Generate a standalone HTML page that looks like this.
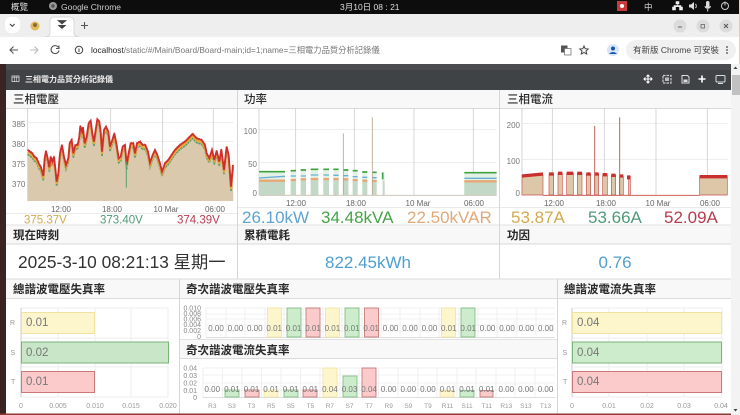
<!DOCTYPE html>
<html><head><meta charset="utf-8"><style>
html,body{margin:0;padding:0;width:740px;height:415px;overflow:hidden;background:#fff}
svg{display:block;position:absolute;left:0;top:0;filter:blur(.35px)}
text{font-family:"Liberation Sans","Noto Sans CJK TC",sans-serif}
.h{font-size:11.5px;fill:#2a2a2a;font-weight:500}
.hb{font-size:11.5px;fill:#2a2a2a;font-weight:700}
.a{font-size:7px;fill:#999}
.v{font-size:8px;fill:#777;text-anchor:middle}
.b{font-size:11.5px;fill:#777}
</style></head><body>
<svg width="740" height="415" viewBox="0 0 740 415" xmlns="http://www.w3.org/2000/svg">
<defs>
<polyline id="vl" points="83 180 90 185 97 190 103 200 110 205 117 222 123 232 130 258 134 205 138 183 143 205 148 232 152 200 157 215 162 200 166 235 170 275 175 250 180 190 186 165 192 200 198 225 205 205 209 160 215 150 220 190 226 165 233 165 238 140 241 108 246 125 249 112 254 160 260 140 266 100 272 92 277 130 282 155 287 120 292 88 298 95 302 125 306 185 312 120 318 110 325 125 330 170 337 150 343 130 350 165 356 205 362 200 368 170 375 165 380 225 385 195 392 160 400 160 405 190 411 160 420 155 428 165 436 165 444 185 450 218 458 195 465 180 472 195 480 220 486 245 495 220 505 210 515 195 525 180 540 165 555 155 565 145 578 132 590 145 605 150 615 165 620 190 628 205 636 180 643 210 650 182 658 215 664 178 672 240 680 170 686 195 693 290 699 225"/>
</defs>
<!-- OS bar -->
<rect width="740" height="14" fill="#0d0d0d"/>
<text x="11" y="10" font-size="8.5" fill="#ddd">概覽</text>
<circle cx="53" cy="6" r="4" fill="#999"/><circle cx="53" cy="6" r="1.7" fill="#555"/>
<text x="61" y="10" font-size="8.5" fill="#ccc">Google Chrome</text>
<text x="340" y="10" font-size="8.5" fill="#ddd">3月10日 08 : 21</text>
<rect x="617" y="1" width="10" height="10" fill="#c93a3a"/><circle cx="622" cy="6" r="2" fill="#fff"/>
<text x="644" y="10" font-size="8.5" fill="#ddd">中</text>
<path d="M676 1.5h3v2.5h-3zM672.500 7h3v3h-3zM679.500 7h3v3h-3zM677.500 4v1.500M674 7V5.500h7V7" fill="#eee" stroke="#eee" stroke-width=".6"/>
<path d="M689 4.500h2l3-2.500v8l-3-2.500h-2z" fill="#ddd"/><path d="M695.500 4a3 3 0 0 1 0 4" stroke="#ddd" fill="none"/>
<rect x="706" y="1" width="3.500" height="7" rx="1.700" fill="#ddd"/><path d="M705 6a2.800 2.800 0 0 0 5.500 0M707.700 9v2.500" stroke="#ddd" fill="none"/>
<circle cx="725" cy="6" r="3.500" stroke="#ccc" fill="none"/><path d="M725 1.500v4" stroke="#ccc"/>
<!-- tab strip -->
<rect y="14" width="740" height="23" fill="#eeeeef"/>
<rect x="5" y="17" width="15" height="16" rx="6" fill="#fff"/>
<path d="M10 24l2.300 2.300 2.300-2.300" stroke="#444" stroke-width="1.100" fill="none"/>
<circle cx="35" cy="26" r="4.500" fill="#e3bb55"/><circle cx="35" cy="25" r="2" fill="#8a6b3c"/>
<path d="M45 37q5 0 5-5V22q0-5 5-5h14q5 0 5 5v10q0 5 5 5z" fill="#fff" stroke="#cfcfcf" stroke-width=".7"/>
<path d="M58 20.500h8l-4 3.500zM58 25l4 3.500 4-3.500" fill="#444" stroke="#444" stroke-width=".8"/>
<path d="M81 25.500h7M84.500 22v7" stroke="#555" stroke-width="1.100"/>
<circle cx="680" cy="26" r="6.500" fill="#dcdcdc"/><path d="M678 27h4" stroke="#666"/>
<circle cx="703" cy="26" r="6.500" fill="#dcdcdc"/><rect x="701" y="24.500" width="3.500" height="3.500" stroke="#666" fill="none" stroke-width=".8"/>
<circle cx="726" cy="26" r="6.500" fill="#dcdcdc"/><path d="M724 24l4 4M728 24l-4 4" stroke="#555"/>
<!-- toolbar -->
<rect y="37" width="740" height="27" fill="#fff"/>
<path d="M18 50h-8M13.500 46.500L10 50l3.500 3.500" stroke="#555" stroke-width="1.100" fill="none"/>
<path d="M30 50h8M34.500 46.500L38 50l-3.500 3.500" stroke="#bbb" stroke-width="1.100" fill="none"/>
<path d="M58.500 47.500a4 4 0 1 0 .5 3M59 45.500v3h-3" stroke="#555" stroke-width="1.100" fill="none"/>
<circle cx="79" cy="50" r="3.700" stroke="#444" fill="none"/><path d="M79 48.500v3.500" stroke="#444"/>
<text x="91" y="53" font-size="8.300" fill="#777"><tspan fill="#222">localhost</tspan>/static/#/Main/Board/Board-main;id=1;name=三相電力品質分析記錄儀</text>
<rect x="561" y="45.500" width="6.500" height="7" fill="#555"/><rect x="564.500" y="48.500" width="6.500" height="6.500" fill="#fff" stroke="#666" stroke-width=".7"/>
<path d="M584 46l1.200 2.700 3 .3-2.200 2 .7 3-2.700-1.600-2.700 1.600.7-3-2.200-2 3-.3z" stroke="#444" fill="none"/>
<circle cx="613" cy="50" r="6" fill="#d8e6f8"/><circle cx="613" cy="48.500" r="2" fill="#1a57b0"/><path d="M609 54q4-4 8 0z" fill="#1a57b0"/>
<rect x="626" y="40" width="110" height="20" rx="10" fill="#f0f0f1"/>
<text x="633" y="53" font-size="8.500" fill="#444">有新版 Chrome 可安裝</text>
<circle cx="727" cy="47" r=".9" fill="#444"/><circle cx="727" cy="50" r=".9" fill="#444"/><circle cx="727" cy="53" r=".9" fill="#444"/>
<!-- page bg -->
<rect y="64" width="6" height="351" fill="#3a2422"/>
<rect x="6" y="64" width="725" height="26" fill="#404346"/>
<rect x="6" y="64" width="725" height="6" fill="#4a4c4f"/>
<rect x="12" y="76" width="7" height="5.500" stroke="#ddd" stroke-width=".8" fill="none"/><path d="M12 77.500h7M14.500 76v5.500M16.500 76v5.500" stroke="#ddd" stroke-width=".6"/>
<text x="25" y="82" font-size="8" fill="#eee" font-weight="700">三相電力品質分析記錄儀</text>
<path d="M644 79h8M648 75v8M646.500 76.500l1.500-1.500 1.500 1.500M646.500 81.500l1.500 1.500 1.500-1.500M645.500 77.500L644 79l1.500 1.500M650.500 77.500L652 79l-1.500 1.500" stroke="#fff" stroke-width="1.100" fill="none"/>
<rect x="663" y="75.500" width="8" height="7.500" fill="none" stroke="#ccc" stroke-width="1.200" stroke-dasharray="2.500 1"/><rect x="665" y="77.500" width="4" height="3.500" fill="#bbb"/>
<path d="M682 75.500h5.500l1.500 1.500v6h-7z" fill="none" stroke="#ddd" stroke-width="1"/><rect x="683.500" y="79.500" width="4" height="2.500" fill="#ddd"/>
<path d="M698.500 79h7M702 75.500v7" stroke="#fff" stroke-width="1.600"/>
<rect x="716" y="75.500" width="9" height="6.500" rx="1" fill="none" stroke="#ddd"/><path d="M718 83.500h5" stroke="#ddd"/>
<!-- scrollbar -->
<rect x="731" y="64" width="9" height="351" fill="#f3f3f3"/>
<path d="M735.500 66.500l-2 2.500h4z" fill="#444"/><rect x="732" y="75" width="8" height="20" fill="#c1c1c1"/>
<path d="M735.500 411.500l-2-2.500h4z" fill="#444"/>
<rect x="739" y="0" width="1" height="64" fill="#e9c8c8"/>

<!-- row headers -->
<rect x="6" y="90" width="725" height="18" fill="#f8f8f8"/><rect x="6" y="108" width="725" height="1" fill="#d9d9d9"/>
<rect x="6" y="225" width="725" height="19" fill="#f8f8f8"/><rect x="6" y="243.500" width="725" height="1" fill="#d9d9d9"/><rect x="6" y="224.500" width="725" height="1" fill="#e2e2e2"/>
<rect x="6" y="279" width="725" height="19" fill="#f8f8f8"/><rect x="6" y="278.500" width="725" height="1" fill="#dcdcdc"/><rect x="6" y="298" width="725" height="1" fill="#dcdcdc"/>
<rect x="180" y="339" width="377" height="19" fill="#f8f8f8"/><rect x="180" y="339" width="377" height=".8" fill="#dcdcdc"/><rect x="180" y="358" width="377" height="1" fill="#dcdcdc"/>
<path d="M237.500 90v189M499.500 90v189M179.500 279v136M557.500 279v136" stroke="#d6d6d6" stroke-width="1"/>
<text class="h" x="13" y="103">三相電壓</text>
<text class="h" x="244" y="103">功率</text>
<text class="h" x="507" y="103">三相電流</text>
<text class="hb" x="13" y="239">現在時刻</text>
<text class="hb" x="244" y="239">累積電耗</text>
<text class="hb" x="507" y="239">功因</text>
<text class="hb" x="13" y="293">總諧波電壓失真率</text>
<text class="hb" x="186" y="293">奇次諧波電壓失真率</text>
<text class="hb" x="564" y="293">總諧波電流失真率</text>
<text class="hb" x="186" y="354">奇次諧波電流失真率</text>

<!-- voltage chart (zoom coords) -->
<g transform="translate(0 90) scale(.3333)">
<path d="M83 97H700M83 155H700M83 215H700M83 275H700" stroke="#e3e3e3" stroke-width="2"/>
<path d="M83 55V333M178 55V333M332 55V333M488 55V333M640 55V333" stroke="#cfcfcf" stroke-width="2.500"/>
<path d="M83 180L90 185 97 190 103 200 110 205 117 222 123 232 130 258 134 205 138 183 143 205 148 232 152 200 157 215 162 200 166 235 170 275 175 250 180 190 186 165 192 200 198 225 205 205 209 160 215 150 220 190 226 165 233 165 238 140 241 108 246 125 249 112 254 160 260 140 266 100 272 92 277 130 282 155 287 120 292 88 298 95 302 125 306 185 312 120 318 110 325 125 330 170 337 150 343 130 350 165 356 205 362 200 368 170 375 165 380 225 385 195 392 160 400 160 405 190 411 160 420 155 428 165 436 165 444 185 450 218 458 195 465 180 472 195 480 220 486 245 495 220 505 210 515 195 525 180 540 165 555 155 565 145 578 132 590 145 605 150 615 165 620 190 628 205 636 180 643 210 650 182 658 215 664 178 672 240 680 170 686 195 693 290 699 225 L700 333 83 333Z" fill="#dac9ac"/>
<g fill="none" stroke-linejoin="miter">
<use href="#vl" transform="translate(0 13)" stroke="#55a06e" stroke-width="5" stroke-dasharray="7 2"/>
<use href="#vl" transform="translate(0 7)" stroke="#e8a83a" stroke-width="6"/>
<use href="#vl" stroke="#cf2f2c" stroke-width="5.500"/>
<use href="#vl" transform="translate(0 -3)" stroke="#cf2f2c" stroke-width="3" stroke-dasharray="2 4"/>
<path d="M379 215V293" stroke="#55a06e" stroke-width="3"/>
</g>
</g>
<g style="font-size:8px;fill:#777"><text x="12" y="127">385</text><text x="12" y="147">380</text><text x="12" y="167">375</text><text x="12" y="187">370</text></g>
<g style="font-size:8px;fill:#666" text-anchor="middle"><text x="61" y="212">12:00</text><text x="112" y="212">18:00</text><text x="166" y="212">10 Mar</text><text x="215" y="212">06:00</text></g>
<rect x="6" y="213" width="231" height=".8" fill="#e4e4e4"/>
<text x="24" y="223.500" style="font-size:11.500px;fill:#d2a94f">375.37V</text>
<text x="100" y="223.500" style="font-size:11.500px;fill:#4f9a78">373.40V</text>
<text x="177" y="223.500" style="font-size:11.500px;fill:#b83c50">374.39V</text>

<!-- power chart -->
<g transform="translate(240 90) scale(.3333)">
<path d="M57 118H770M57 217H770" stroke="#e3e3e3" stroke-width="2"/>
<path d="M57 55V315M167 55V315M343 55V315M522 55V315M700 55V315" stroke="#cfcfcf" stroke-width="2.500"/>
<path d="M57 245H135V315H57ZM152 242H168V315H152ZM182 240H198V315H182ZM212 238H235V315H212ZM250 238H267V315H250ZM280 238H296V315H280ZM310 240H325V315H310ZM338 242H353V315H338ZM367 246H382V315H367ZM396 247H410V315H396ZM428 247H434V315H428ZM673 248H770V315H673Z" fill="#e3f2e4"/>
<path d="M57 272H135V315H57ZM152 270H168V315H152ZM182 268H198V315H182ZM212 266H235V315H212ZM250 266H267V315H250ZM280 266H296V315H280ZM310 268H325V315H310ZM338 270H353V315H338ZM367 272H382V315H367ZM396 272H410V315H396ZM428 272H434V315H428ZM673 272H770V315H673Z" fill="#c3d8c6"/>
<path d="M57 245H135M152 242H168M182 240H198M212 238H235M250 238H267M280 238H296M310 240H325M338 242H353M367 246H382M396 247H410M428 247V268M673 248H770" stroke="#3fa33f" stroke-width="5" fill="none"/>
<path d="M57 264L135 259M152 258H168M182 258H198M212 255H235M250 255H267M280 256H296M310 257H325M338 260H353M367 262H382M396 263H410M673 265H770" stroke="#6aaed6" stroke-width="4" fill="none"/>
<path d="M57 272H135M152 270H168M182 268H198M212 267H235M250 267H267M280 267H296M310 268H325M338 270H353M367 272H382M396 273H410M673 274H770" stroke="#e6a877" stroke-width="7" fill="none"/>
<path d="M310 130V315M397 82V315" stroke="#b8a689" stroke-width="2.500"/>
<path d="M57 316H770" stroke="#c9c0b0" stroke-width="2.500"/>
</g>
<g style="font-size:8px;fill:#777" text-anchor="end"><text x="257" y="134">100</text><text x="257" y="167">50</text><text x="257" y="196">0</text></g>
<g style="font-size:8px;fill:#666" text-anchor="middle"><text x="296" y="206">12:00</text><text x="356" y="206">18:00</text><text x="418" y="206">10 Mar</text><text x="474" y="206">06:00</text></g>
<rect x="238" y="207" width="261" height=".8" fill="#e4e4e4"/>
<text x="242" y="223" style="font-size:17px;fill:#5fa4d0">26.10kW</text>
<text x="321" y="223" style="font-size:17px;fill:#46a346">34.48kVA</text>
<text x="407" y="223" style="font-size:17px;fill:#e0a97a">22.50kVAR</text>

<!-- current chart -->
<g transform="translate(498 90) scale(.3333)">
<path d="M72 100H690M72 208H690" stroke="#e3e3e3" stroke-width="2"/>
<path d="M72 55V315M163 55V315M319 55V315M474 55V315M628 55V315" stroke="#cfcfcf" stroke-width="2.500"/>
<path d="M72 256H135V315H72ZM153 252H167V315H153ZM180 250H193V315H180ZM206 250H226V315H206ZM238 250H252V315H238ZM265 252H278V315H265ZM290 252H302V315H290ZM314 254H328V315H314ZM340 256H353V315H340ZM364 258H376V315H364ZM392 258H397V315H392ZM605 258H688V315H605Z" fill="#dcc7a8" stroke="#c9504c" stroke-width="2"/>
<path d="M72 258L135 252M153 252H167M180 250H193M206 250H226M238 250H252M265 252H278M290 252H302M314 254H328M340 256H353M364 258H376M392 256V268M605 260H688" stroke="#c92f2c" stroke-width="10" fill="none"/>
<path d="M290 108V315M365 82V315" stroke="#c46460" stroke-width="3"/>
<path d="M135 316H605" stroke="#d0605c" stroke-width="3"/>
</g>
<g style="font-size:8px;fill:#777" text-anchor="end"><text x="520" y="128">200</text><text x="520" y="164">100</text><text x="520" y="196">0</text></g>
<g style="font-size:8px;fill:#666" text-anchor="middle"><text x="554" y="206">12:00</text><text x="606" y="206">18:00</text><text x="658" y="206">10 Mar</text><text x="710" y="206">06:00</text></g>
<rect x="500" y="207" width="231" height=".8" fill="#e4e4e4"/>
<text x="511" y="223" style="font-size:17px;fill:#d2a94f">53.87A</text>
<text x="588" y="223" style="font-size:17px;fill:#4f9a78">53.66A</text>
<text x="664" y="223" style="font-size:17px;fill:#b83c50">52.09A</text>

<!-- row 2 values -->
<text x="18" y="268" style="font-size:17.300px;fill:#333">2025-3-10 08:21:13 星期一</text>
<text x="368" y="268" text-anchor="middle" style="font-size:17px;fill:#4f9fcf">822.45kWh</text>
<text x="615" y="268" text-anchor="middle" style="font-size:17px;fill:#4f9fcf">0.76</text>

<!-- left THD -->
<path d="M21 308H168M21 338H168M21 367H168M21 397H168M58 308V397M95 308V397M131 308V397M168 308V397" stroke="#eee"/>
<path d="M21 308V397" stroke="#ccc"/>
<rect x="21.500" y="312.500" width="73" height="21" fill="#fdf5cc" stroke="#f0e2a0"/>
<rect x="21.500" y="342" width="147" height="21" fill="#c9e6c8" stroke="#79b37a"/>
<rect x="21.500" y="371.500" width="73" height="21" fill="#fbcaca" stroke="#c87a7a"/>
<text class="b" x="26" y="326">0.01</text><text class="b" x="26" y="356">0.02</text><text class="b" x="26" y="385">0.01</text>
<text class="a" x="10" y="325">R</text><text class="a" x="10.500" y="355">S</text><text class="a" x="11" y="384">T</text>
<g text-anchor="middle"><text class="a" x="21" y="408">0</text><text class="a" x="58" y="408">0.005</text><text class="a" x="95" y="408">0.010</text><text class="a" x="131" y="408">0.015</text><text class="a" x="168" y="408">0.020</text></g>

<!-- right THD -->
<path d="M572 308H722M572 338H722M572 367H722M572 397H722M609 308V397M647 308V397M684 308V397M722 308V397" stroke="#eee"/>
<path d="M572 308V397" stroke="#ccc"/>
<rect x="572.500" y="312.500" width="149" height="21" fill="#fdf5cc" stroke="#f0e2a0"/>
<rect x="572.500" y="342" width="149" height="21" fill="#cdeccb" stroke="#79b37a"/>
<rect x="572.500" y="371.500" width="149" height="21" fill="#fbcaca" stroke="#c87a7a"/>
<text class="b" x="577" y="326">0.04</text><text class="b" x="577" y="356">0.04</text><text class="b" x="577" y="385">0.04</text>
<text class="a" x="562" y="325">R</text><text class="a" x="562.500" y="355">S</text><text class="a" x="563" y="384">T</text>
<g text-anchor="middle"><text class="a" x="572" y="408">0</text><text class="a" x="609" y="408">0.01</text><text class="a" x="647" y="408">0.02</text><text class="a" x="684" y="408">0.03</text><text class="a" x="721" y="408">0.04</text></g>

<!-- mid top chart -->
<path d="M206 308H555M206 314H555M206 319H555M206 325H555M206 331H555" stroke="#f0f0f0"/>
<path d="M206 337.500H555" stroke="#ddd"/>
<path d="M206 308V337M226 308V337M245 308V337M265 308V337M284 308V337M303 308V337M323 308V337M342 308V337M362 308V337M381 308V337M400 308V337M420 308V337M439 308V337M459 308V337M478 308V337M497 308V337M517 308V337M536 308V337" stroke="#efefef"/>
<g style="font-size:7px;fill:#888" text-anchor="end"><text x="201" y="310.500">0.010</text><text x="201" y="316">0.008</text><text x="201" y="321.500">0.006</text><text x="201" y="327">0.004</text><text x="201" y="333">0.002</text><text x="201" y="339">0</text></g>
<g stroke-width=".8">
<rect x="267.500" y="308" width="14" height="29" fill="#fdf5cc" stroke="#efe2a2"/>
<rect x="287" y="308" width="14" height="29" fill="#cdeccb" stroke="#7cb67d"/>
<rect x="306" y="308" width="14" height="29" fill="#fbcaca" stroke="#bb6e6e"/>
<rect x="325.500" y="308" width="14" height="29" fill="#fdf5cc" stroke="#efe2a2"/>
<rect x="345" y="308" width="14" height="29" fill="#cdeccb" stroke="#7cb67d"/>
<rect x="364.500" y="308" width="14" height="29" fill="#fbcaca" stroke="#bb6e6e"/>
<rect x="441.500" y="308" width="14" height="29" fill="#fdf5cc" stroke="#efe2a2"/>
<rect x="461" y="308" width="14" height="29" fill="#cdeccb" stroke="#7cb67d"/>
</g>
<text class="v" x="216" y="331">0.00</text><text class="v" x="235.400" y="331">0.00</text><text class="v" x="254.800" y="331">0.00</text><text class="v" x="274.200" y="331">0.01</text><text class="v" x="293.600" y="331">0.01</text><text class="v" x="313" y="331">0.01</text><text class="v" x="332.400" y="331">0.01</text><text class="v" x="351.800" y="331">0.01</text><text class="v" x="371.200" y="331">0.01</text><text class="v" x="390.600" y="331">0.00</text><text class="v" x="410" y="331">0.00</text><text class="v" x="429.400" y="331">0.00</text><text class="v" x="448.800" y="331">0.01</text><text class="v" x="468.200" y="331">0.01</text><text class="v" x="487.600" y="331">0.00</text><text class="v" x="507" y="331">0.00</text><text class="v" x="526.400" y="331">0.00</text><text class="v" x="545.800" y="331">0.00</text>

<!-- mid bottom chart -->
<path d="M203 368H555M203 375H555M203 383H555M203 390H555" stroke="#f0f0f0"/>
<path d="M203 397.500H555" stroke="#ddd"/>
<path d="M203 368V397M222.500 368V397M242 368V397M261.500 368V397M281 368V397M300.500 368V397M320 368V397M340 368V397M359 368V397M378.500 368V397M398 368V397M418 368V397M437 368V397M457 368V397M476 368V397M496 368V397M515 368V397M535 368V397" stroke="#efefef"/>
<g style="font-size:7px;fill:#888" text-anchor="end"><text x="197" y="370.500">0.04</text><text x="197" y="378">0.03</text><text x="197" y="385.500">0.02</text><text x="197" y="393">0.01</text><text x="197" y="400">0</text></g>
<g stroke-width=".8">
<rect x="225" y="390" width="14" height="7" fill="#cdeccb" stroke="#7cb67d"/>
<rect x="245" y="390" width="14" height="7" fill="#fbcaca" stroke="#bb6e6e"/>
<rect x="264" y="390" width="14" height="7" fill="#fdf5cc" stroke="#efe2a2"/>
<rect x="284" y="390" width="14" height="7" fill="#cdeccb" stroke="#7cb67d"/>
<rect x="303" y="390" width="14" height="7" fill="#fbcaca" stroke="#bb6e6e"/>
<rect x="323" y="368" width="14" height="29" fill="#fdf5cc" stroke="#efe2a2"/>
<rect x="343" y="376" width="14" height="21" fill="#cdeccb" stroke="#7cb67d"/>
<rect x="362" y="368" width="14" height="29" fill="#fbcaca" stroke="#bb6e6e"/>
<rect x="440" y="390.500" width="14" height="6.500" fill="#fdf5cc" stroke="#efe2a2"/>
<rect x="460" y="390.500" width="14" height="6.500" fill="#cdeccb" stroke="#7cb67d"/>
<rect x="480" y="390.500" width="13" height="6.500" fill="#fbcaca" stroke="#bb6e6e"/>
</g>
<text class="v" x="212.300" y="392">0.00</text><text class="v" x="231.900" y="392">0.01</text><text class="v" x="251.500" y="392">0.01</text><text class="v" x="271.100" y="392">0.01</text><text class="v" x="290.700" y="392">0.01</text><text class="v" x="310.300" y="392">0.01</text><text class="v" x="329.900" y="392">0.04</text><text class="v" x="349.500" y="392">0.03</text><text class="v" x="369.100" y="392">0.04</text><text class="v" x="388.700" y="392">0.00</text><text class="v" x="408.300" y="392">0.00</text><text class="v" x="427.900" y="392">0.00</text><text class="v" x="447.500" y="392">0.01</text><text class="v" x="467.100" y="392">0.01</text><text class="v" x="486.700" y="392">0.01</text><text class="v" x="506.300" y="392">0.00</text><text class="v" x="525.900" y="392">0.00</text><text class="v" x="545.500" y="392">0.00</text>
<g style="font-size:6.500px;fill:#999" text-anchor="middle"><text x="212.300" y="408">R3</text><text x="231.900" y="408">S3</text><text x="251.500" y="408">T3</text><text x="271.100" y="408">R5</text><text x="290.700" y="408">S5</text><text x="310.300" y="408">T5</text><text x="329.900" y="408">R7</text><text x="349.500" y="408">S7</text><text x="369.100" y="408">T7</text><text x="388.700" y="408">R9</text><text x="408.300" y="408">S9</text><text x="427.900" y="408">T9</text><text x="447.500" y="408">R11</text><text x="467.100" y="408">S11</text><text x="486.700" y="408">T11</text><text x="506.300" y="408">R13</text><text x="525.900" y="408">S13</text><text x="545.500" y="408">T13</text></g>
<rect x="0" y="413.500" width="731" height="1.500" fill="#8e3a2e"/>
</svg>
</body></html>
